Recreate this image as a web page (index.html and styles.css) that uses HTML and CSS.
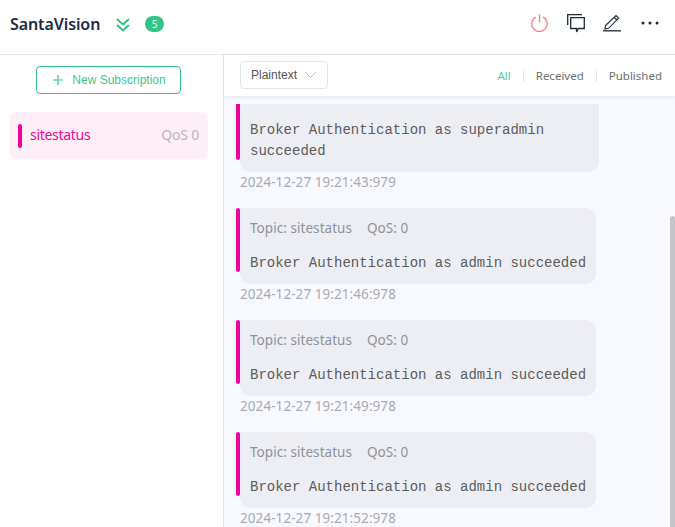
FILE: index.html
```html
<!DOCTYPE html>
<html lang="en">
<head>
<meta charset="utf-8">
<title>SantaVision</title>
<link rel="stylesheet" href="styles.css">
</head>
<body>
<div class="app">
  <header class="topbar">
    <div class="brand">
      <span class="brand-name">SantaVision</span>
      <svg class="chevrons" width="14" height="14" viewBox="0 0 14 14" fill="none" stroke="#34c388" stroke-width="2"><path d="M1 1l6 5.500L13 1"/><path d="M1 7l6 5.500L13 7"/></svg>
      <span class="badge">5</span>
    </div>
    <div class="actions">
      <svg class="icon-power" width="17" height="18" viewBox="0 0 17 18" fill="none" stroke="#f77e7e" stroke-width="1.300"><path d="M5 3a7.700 7.700 0 1 0 7 0"/><path d="M8.500 0.500v8"/></svg>
      <svg class="icon-chat" width="18" height="19" viewBox="0 0 18 19" fill="none" stroke="#1f2a3c" stroke-width="1.300"><path d="M0.700 11V0.700H15"/><path d="M3.700 3.700H17.300V14.500H11.300L9.500 18V14.500H3.700z"/></svg>
      <svg class="icon-pen" width="18" height="18" viewBox="0 0 18 18" fill="none" stroke="#1f2a3c" stroke-width="1.200"><path d="M2.500 11.500 2 15l3.500-.7L15.500 4.300 13 1.500z"/><path d="M11.300 3.300 13.800 6"/><path d="M0 16.800h18" stroke-width="1.500" stroke="#3a4355"/></svg>
      <svg class="icon-more" width="18" height="4" viewBox="0 0 18 4" fill="#1f2a3c"><circle cx="2" cy="2" r="1.500"/><circle cx="9" cy="2" r="1.500"/><circle cx="16" cy="2" r="1.500"/></svg>
    </div>
  </header>
  <div class="main">
    <aside class="sidebar">
      <button class="new-sub"><svg class="plus" width="10" height="10" viewBox="0 0 10 10" stroke="#34c388" stroke-width="1.200"><path d="M5 0v10M0 5h10"/></svg>New Subscription</button>
      <div class="sub-item">
        <span class="sub-mark"></span>
        <span class="sub-name">sitestatus</span>
        <span class="sub-qos">QoS 0</span>
      </div>
    </aside>
    <section class="content">
      <div class="toolbar">
        <div class="select">Plaintext
          <svg width="13" height="8" viewBox="0 0 13 8" fill="none" stroke="#b9bdc6" stroke-width="1"><path d="M1 1l5.500 5.500L12 1"/></svg>
        </div>
        <div class="filters">
          <span class="filter active">All</span>
          <span class="filter">Received</span>
          <span class="filter">Published</span>
        </div>
      </div>
      <div class="messages">
        <div class="msg first">
          <div class="bubble wide">
            <pre class="payload">Broker Authentication as superadmin
succeeded</pre>
          </div>
          <div class="time">2024-12-27 19:21:43:979</div>
        </div>
        <div class="msg">
          <div class="bubble">
            <div class="meta"><span>Topic: sitestatus</span><span>QoS: 0</span></div>
            <pre class="payload">Broker Authentication as admin succeeded</pre>
          </div>
          <div class="time">2024-12-27 19:21:46:978</div>
        </div>
        <div class="msg">
          <div class="bubble">
            <div class="meta"><span>Topic: sitestatus</span><span>QoS: 0</span></div>
            <pre class="payload">Broker Authentication as admin succeeded</pre>
          </div>
          <div class="time">2024-12-27 19:21:49:978</div>
        </div>
        <div class="msg">
          <div class="bubble">
            <div class="meta"><span>Topic: sitestatus</span><span>QoS: 0</span></div>
            <pre class="payload">Broker Authentication as admin succeeded</pre>
          </div>
          <div class="time">2024-12-27 19:21:52:978</div>
        </div>
        <div class="scroll-thumb"></div>
      </div>
    </section>
  </div>
</div>
</body>
</html>
```
FILE: styles.css
```css
* { box-sizing: border-box; }
html, body { margin: 0; height: 100%; overflow: hidden; }
body { font-family: "Noto Sans", sans-serif; background: #fff; color: #1f2a3c; }
.app { width: 675px; height: 527px; display: flex; flex-direction: column; overflow: hidden; }
.topbar { height: 55px; flex: none; display: flex; align-items: center; justify-content: space-between; padding: 0 16px 6px 10px; border-bottom: 1px solid #e4e6ee; }
.brand { display: flex; align-items: center; }
.brand-name { font-size: 16px; font-weight: 600; color: #222b3f; width: 106px; letter-spacing: -0.1px; }
.chevrons { margin: 2px 15px 0 0; }
.badge { width: 19px; height: 16px; border-radius: 8px; background: #34c388; color: #e8fff4; font-size: 10px; line-height: 16px; text-align: center; }
.actions { display: flex; align-items: center; margin-bottom: 2px; }
.icon-chat { margin-left: 19px; }
.icon-pen { margin-left: 18px; }
.icon-more { margin-left: 20px; }
.main { flex: 1; display: flex; min-height: 0; }
.sidebar { width: 224px; flex: none; border-right: 1px solid #e4e6ee; padding: 11px 15px 0 10px; display: flex; flex-direction: column; }
.new-sub { align-self: flex-start; margin-left: 26px; width: 145px; height: 28px; border: 1px solid #34c388; border-radius: 4px; background: #fff; color: #3cc790; font-family: "Liberation Sans", sans-serif; font-size: 12px; padding: 0 0 0 2px; display: flex; align-items: center; justify-content: center; }
.plus { margin-right: 9px; }
.sub-item { margin-top: 18px; height: 47px; border-radius: 8px; background: #feeef8; display: flex; align-items: center; padding: 0 9px 0 8px; font-size: 14px; box-shadow: 0 1px 3px rgba(0,0,0,.03); }
.sub-mark { width: 4px; height: 24px; border-radius: 2px; background: #ec059a; margin-right: 8px; }
.sub-name { color: #ec059a; flex: 1; letter-spacing: -0.3px; padding-bottom: 2px; }
.sub-qos { color: #b6b9c2; letter-spacing: -0.2px; padding-bottom: 2px; }
.content { flex: 1; min-width: 0; display: flex; flex-direction: column; background: #f8f9ff; }
.toolbar { height: 41px; flex: none; background: #fff; display: flex; align-items: center; justify-content: space-between; padding: 0 13px 0 16px; box-shadow: 0 1px 4px rgba(0,0,0,.08); position: relative; }
.select { width: 88px; height: 28px; margin-bottom: 1px; border: 1px solid #e4e6ee; border-radius: 4px; display: flex; align-items: center; justify-content: space-between; padding: 0 10px; font-family: "Liberation Sans", sans-serif; font-size: 12px; color: #555; }
.filters { display: flex; align-items: center; font-size: 11.500px; color: #6e6e6e; }
.filter { padding: 0 12px; border-left: 1px solid #e4e6ee; line-height: 13px; }
.filter:first-child { border-left: 0; }
.filter:last-child { padding-right: 0; }
.filter.active { color: #4ccb98; }
.messages { flex: 1; min-height: 0; position: relative; overflow: hidden; padding: 8px 0 0 16px; }
.msg { margin-bottom: 17px; }
.bubble { position: relative; width: fit-content; background: #edeef3; border-radius: 0 10px 10px 10px; padding: 13px 10px 10px; }
.bubble::before { content: ""; position: absolute; left: -4px; top: 0; width: 4px; height: 64px; border-radius: 2px; background: #ec059a; }
.bubble.wide { width: 359px; padding: 16px 10px 10px; border-top-right-radius: 0; }
.bubble.wide::before { height: 56px; border-radius: 0 0 2px 2px; }
.meta { display: flex; gap: 15px; font-size: 13.500px; line-height: 14px; color: #8f929b; letter-spacing: 0.05px; height: 14px; margin-bottom: 18px; }
.payload { margin: 0; font-family: "Liberation Mono", monospace; font-size: 14px; line-height: 21px; color: #5c5c5c; }
.time { margin-top: 1px; font-size: 13.500px; line-height: 18px; color: #a9abb2; letter-spacing: 0.07px; }
.scroll-thumb { position: absolute; right: 0; top: 120px; bottom: 0; width: 5px; background: #c5c5c8; border-radius: 3px 3px 0 0; }
```
